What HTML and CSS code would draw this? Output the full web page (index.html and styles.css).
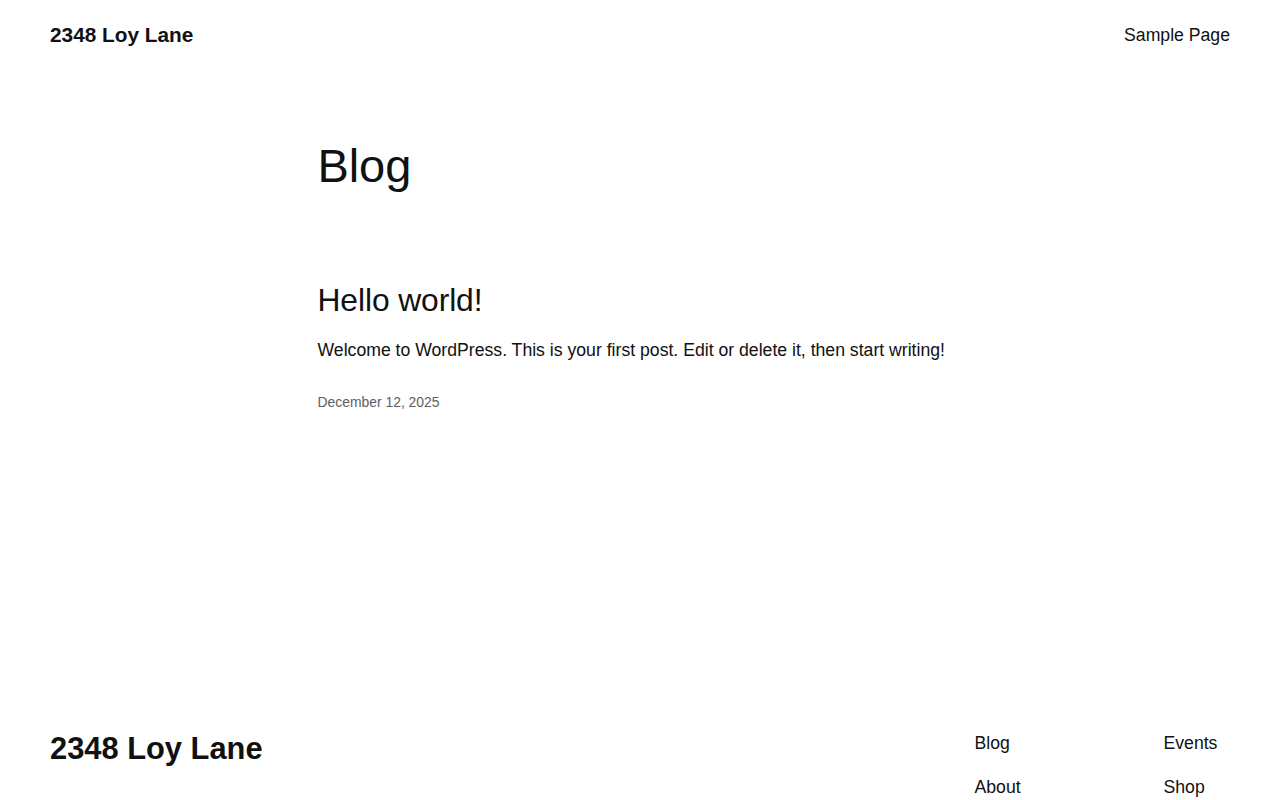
FILE: index.html
```html
<!DOCTYPE html>
<html lang="en">
<head>
<meta charset="utf-8">
<title>Blog – 2348 Loy Lane</title>
<link rel="stylesheet" href="styles.css">
</head>
<body>
<header class="site-header">
  <a class="site-title" href="#">2348 Loy Lane</a>
  <nav class="header-nav"><a href="#">Sample Page</a></nav>
</header>
<main class="site-main">
  <h1 class="page-title">Blog</h1>
  <article class="post">
    <h2 class="post-title"><a href="#">Hello world!</a></h2>
    <p class="post-excerpt">Welcome to WordPress. This is your first post. Edit or delete it, then start writing!</p>
    <div class="post-date">December 12, 2025</div>
  </article>
</main>
<footer class="site-footer">
  <a class="footer-title" href="#">2348 Loy Lane</a>
  <nav class="footer-nav">
    <ul class="footer-col">
      <li><a href="#">Blog</a></li>
      <li><a href="#">About</a></li>
    </ul>
    <ul class="footer-col">
      <li><a href="#">Events</a></li>
      <li><a href="#">Shop</a></li>
    </ul>
  </nav>
</footer>
</body>
</html>
```
FILE: styles.css
```css
html, body {
  margin: 0;
  padding: 0;
  background: #ffffff;
}
body {
  font-family: "Liberation Sans", Arial, sans-serif;
  color: #111111;
}
a {
  color: inherit;
  text-decoration: none;
}
.site-header {
  display: flex;
  justify-content: space-between;
  align-items: center;
  padding: 21px 50px 0;
  height: 28px;
}
.site-title {
  font-size: 20.8px;
  font-weight: 700;
  line-height: 28px;
}
.header-nav {
  font-size: 17.65px;
  line-height: 28px;
}
.site-main {
  width: 645px;
  margin: 0 auto;
  padding-bottom: 316px;
}
.page-title {
  margin: 88px 0 0;
  font-size: 47px;
  font-weight: 400;
  line-height: 57.6px;
  letter-spacing: -0.1px;
}
.post-title {
  margin: 86px 0 0;
  font-size: 31.8px;
  font-weight: 400;
  line-height: 38.4px;
  letter-spacing: -0.1px;
}
.post-excerpt {
  margin: 18px 0 0;
  font-size: 17.65px;
  line-height: 27px;
}
.post-date {
  margin-top: 28px;
  font-size: 13.9px;
  line-height: 21px;
  color: #5e5e5e;
}
.site-footer {
  display: flex;
  justify-content: space-between;
  align-items: flex-start;
  padding: 0 50px 60px;
}
.footer-title {
  font-size: 30.85px;
  font-weight: 700;
  line-height: 37px;
  padding-top: 1px;
}
.footer-nav {
  display: grid;
  grid-template-columns: 67.5px 67.5px;
  column-gap: 121.5px;
  padding-top: 1px;
  margin-right: -1px;
}
.footer-col {
  list-style: none;
  margin: 0;
  padding: 0;
  display: flex;
  flex-direction: column;
  gap: 17px;
  font-size: 17.65px;
  line-height: 27px;
  white-space: nowrap;
}
```
